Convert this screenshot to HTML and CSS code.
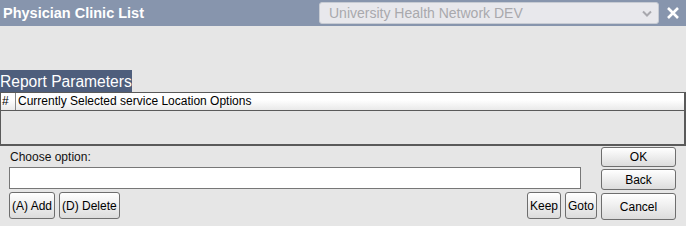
FILE: index.html
```html
<!DOCTYPE html>
<html lang="en">

<head>
    <meta charset="UTF-8">
    <meta name="viewport" content="width=device-width, initial-scale=1.0">
    <title>Physician Clinic List</title>
    <link rel="stylesheet" href="styles.css">
</head>

<body>
    <div class="window">
        <div class="titlebar">
            <div class="title">Physician Clinic List</div>
            <div class="site-select">
                <span class="site-name">University Health Network DEV</span>
                <svg class="chevron" width="10" height="7" viewBox="0 0 10 7">
                    <path d="M1 1.5 L5 5.5 L9 1.5" fill="none" stroke="#a8a8ae" stroke-width="2"/>
                </svg>
            </div>
            <svg class="close" width="14" height="14" viewBox="0 0 14 14">
                <path d="M2 2 L12 12 M12 2 L2 12" stroke="#fff" stroke-width="2.6"/>
            </svg>
        </div>

        <div class="content">
            <div class="section-label">Report Parameters</div>
            <div class="grid">
                <div class="grid-head">
                    <div class="cell num">#</div>
                    <div class="cell desc">Currently Selected service Location Options</div>
                </div>
                <div class="grid-body"></div>
            </div>

            <div class="form">
                <div class="form-left">
                    <div class="prompt">Choose option:</div>
                    <input class="option-input" type="text">
                    <div class="button-row">
                        <button class="btn">(A) Add</button>
                        <button class="btn">(D) Delete</button>
                        <div class="spacer"></div>
                        <button class="btn">Keep</button>
                        <button class="btn">Goto</button>
                    </div>
                </div>
                <div class="form-right">
                    <button class="btn wide ok">OK</button>
                    <button class="btn wide back">Back</button>
                    <button class="btn wide cancel">Cancel</button>
                </div>
            </div>
        </div>
    </div>
</body>

</html>
```

FILE: styles.css
```css
body {
    margin: 0;
    background-color: #e6e6e6;
    font-family: "Liberation Sans", Arial, sans-serif;
}

.window {
    width: 686px;
    height: 226px;
    overflow: hidden;
}

.titlebar {
    height: 26px;
    background-color: #8795ad;
    display: flex;
    align-items: center;
    padding-left: 3px;
}

.title {
    color: white;
    font-weight: bold;
    font-size: 14.5px;
}

.site-select {
    margin-left: auto;
    width: 323px;
    height: 20px;
    background-color: #e8e8ec;
    border: 1px solid #c7cbd3;
    border-radius: 3px;
    display: flex;
    align-items: center;
    padding: 0 6px 0 9px;
    box-sizing: content-box;
}

.site-name {
    color: #a9a9ad;
    font-size: 14px;
    flex: 1;
}

.chevron {
    margin-top: 1px;
}

.close {
    margin: 0 6px 0 7px;
}

.content {
    padding-top: 44px;
}

.section-label {
    display: inline-block;
    height: 22px;
    line-height: 24px;
    background-color: #4e5e7c;
    color: white;
    font-size: 15.6px;
}

.grid {
    border: 1px solid #5a5a5a;
    border-right-width: 2px;
    border-bottom-width: 2px;
}

.grid-head {
    display: flex;
    height: 17px;
    border-bottom: 1px solid #5a5a5a;
    background: linear-gradient(#ffffff 40%, #e9e9e9);
}

.cell {
    font-size: 12px;
    line-height: 17px;
    color: #000;
}

.cell.num {
    width: 13px;
    padding-left: 1px;
    border-right: 1px solid #888;
}

.cell.desc {
    padding-left: 2px;
}

.grid-body {
    height: 33px;
}

.form {
    display: flex;
    padding: 1px 10px 0 9px;
    gap: 4px;
}

.form-left {
    width: 588px;
    display: flex;
    flex-direction: column;
}

.prompt {
    font-size: 12px;
    height: 20px;
    line-height: 20px;
    color: #111;
    margin-left: 1px;
}

.option-input {
    width: 572px;
    height: 22px;
    box-sizing: border-box;
    border: 1px solid #777;
    background: white;
    margin: 0;
}

.button-row {
    display: flex;
    gap: 4px;
    margin-top: 3px;
}

.spacer {
    flex: 1;
}

.btn {
    height: 27px;
    padding: 0 2px;
    font-family: "Liberation Sans", Arial, sans-serif;
    font-size: 12px;
    color: #000;
    border: 1px solid #6e6e6e;
    border-radius: 3px;
    background: linear-gradient(#ffffff, #dcdcdc);
}

.form-right {
    display: flex;
    flex-direction: column;
    width: 75px;
}

.btn.wide {
    width: 75px;
}

.btn.ok {
    height: 20px;
}

.btn.back {
    height: 21px;
    margin-top: 2px;
}

.btn.cancel {
    margin-top: 3px;
}
```
